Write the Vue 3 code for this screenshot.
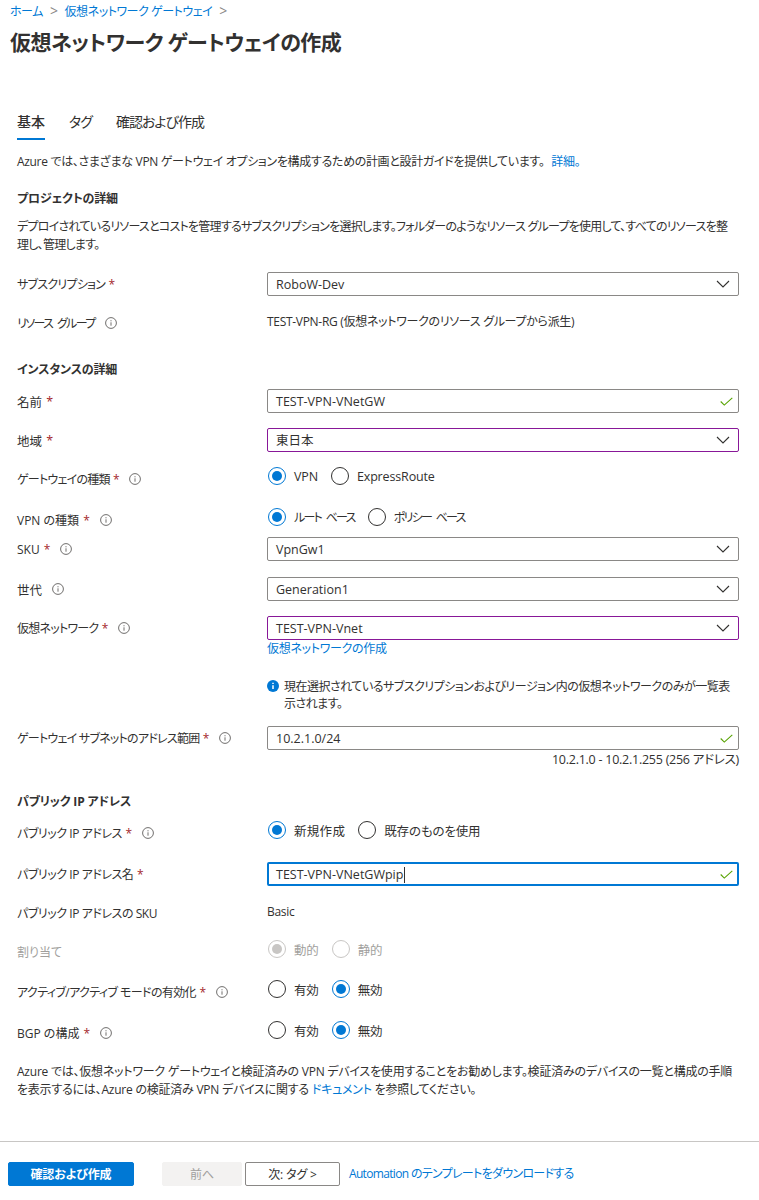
<script setup>
const chevron = 'M1 1l6 6 6-6'
</script>

<template>
  <div class="page">
    <nav class="crumbs">
      <a>ホーム</a><span class="sep">&gt;</span><a>仮想ネットワーク ゲートウェイ</a><span class="sep">&gt;</span>
    </nav>
    <h1>仮想ネットワーク ゲートウェイの作成</h1>

    <div class="tabs">
      <span class="tab active">基本</span>
      <span class="tab">タグ</span>
      <span class="tab">確認および作成</span>
    </div>

    <p class="intro">Azure では、さまざまな VPN ゲートウェイ オプションを構成するための計画と設計ガイドを提供しています。 <a class="more">詳細。</a></p>

    <h2 class="h-project">プロジェクトの詳細</h2>
    <p class="desc">デプロイされているリソースとコストを管理するサブスクリプションを選択します。フォルダーのようなリソース グループを使用して、すべてのリソースを整<br>理し、管理します。</p>

    <div class="row mt-sub">
      <label>サブスクリプション <i>*</i></label>
      <div class="input">RoboW-Dev<svg class="chev" viewBox="0 0 14 8"><path :d="chevron"/></svg></div>
    </div>
    <div class="row mt-13 plain">
      <label class="tight">リソース グループ<svg class="info" viewBox="0 0 12 12"><circle cx="6" cy="6" r="5.4"/><path d="M6 5.3v3.4M6 3.2v1.1"/></svg></label>
      <div>TEST-VPN-RG (仮想ネットワークのリソース グループから派生)</div>
    </div>

    <h2 class="h-instance">インスタンスの詳細</h2>

    <div class="row mt-9">
      <label class="wide">名前 <i>*</i></label>
      <div class="input">TEST-VPN-VNetGW<svg class="check" viewBox="0 0 13 9"><path d="M.7 4.5l3.6 3.6L12.3.8"/></svg></div>
    </div>
    <div class="row mt-15">
      <label class="wide">地域 <i>*</i></label>
      <div class="input purple">東日本<svg class="chev" viewBox="0 0 14 8"><path :d="chevron"/></svg></div>
    </div>
    <div class="row mt-12 radio-row">
      <label>ゲートウェイの種類 <i>*</i><svg class="info" viewBox="0 0 12 12"><circle cx="6" cy="6" r="5.4"/><path d="M6 5.3v3.4M6 3.2v1.1"/></svg></label>
      <div class="radios">
        <span class="radio on"><b></b>VPN</span>
        <span class="radio"><b></b>ExpressRoute</span>
      </div>
    </div>
    <div class="row mt-17 radio-row">
      <label class="keep">VPN の種類 <i>*</i><svg class="info" viewBox="0 0 12 12"><circle cx="6" cy="6" r="5.4"/><path d="M6 5.3v3.4M6 3.2v1.1"/></svg></label>
      <div class="radios">
        <span class="radio on narrow"><b></b>ルート ベース</span>
        <span class="radio narrow"><b></b>ポリシー ベース</span>
      </div>
    </div>
    <div class="row mt-8">
      <label class="keep">SKU <i>*</i><svg class="info" viewBox="0 0 12 12"><circle cx="6" cy="6" r="5.4"/><path d="M6 5.3v3.4M6 3.2v1.1"/></svg></label>
      <div class="input">VpnGw1<svg class="chev" viewBox="0 0 14 8"><path :d="chevron"/></svg></div>
    </div>
    <div class="row mt-16">
      <label class="wide">世代<svg class="info" viewBox="0 0 12 12"><circle cx="6" cy="6" r="5.4"/><path d="M6 5.3v3.4M6 3.2v1.1"/></svg></label>
      <div class="input">Generation1<svg class="chev" viewBox="0 0 14 8"><path :d="chevron"/></svg></div>
    </div>
    <div class="row mt-15">
      <label>仮想ネットワーク <i>*</i><svg class="info" viewBox="0 0 12 12"><circle cx="6" cy="6" r="5.4"/><path d="M6 5.3v3.4M6 3.2v1.1"/></svg></label>
      <div class="input purple">TEST-VPN-Vnet<svg class="chev" viewBox="0 0 14 8"><path :d="chevron"/></svg></div>
    </div>
    <div class="under">
      <a>仮想ネットワークの作成</a>
      <div class="note">
        <svg viewBox="0 0 12 12"><circle cx="6" cy="6" r="6" fill="#0078d4"/><path d="M6 5.2v3.9M6 2.7v1.3" stroke="#fff" stroke-width="1.5"/></svg>
        <span>現在選択されているサブスクリプションおよびリージョン内の仮想ネットワークのみが一覧表<br>示されます。</span>
      </div>
    </div>
    <div class="row mt-subnet">
      <label>ゲートウェイ サブネットのアドレス範囲 <i>*</i><svg class="info" viewBox="0 0 12 12"><circle cx="6" cy="6" r="5.4"/><path d="M6 5.3v3.4M6 3.2v1.1"/></svg></label>
      <div class="input">10.2.1.0/24<svg class="check" viewBox="0 0 13 9"><path d="M.7 4.5l3.6 3.6L12.3.8"/></svg></div>
    </div>
    <div class="range">10.2.1.0 - 10.2.1.255 (256 アドレス)</div>

    <h2 class="h-public">パブリック IP アドレス</h2>

    <div class="row mt-public radio-row">
      <label class="ip">パブリック IP アドレス <i>*</i><svg class="info" viewBox="0 0 12 12"><circle cx="6" cy="6" r="5.4"/><path d="M6 5.3v3.4M6 3.2v1.1"/></svg></label>
      <div class="radios">
        <span class="radio on spread"><b></b>新規作成</span>
        <span class="radio"><b></b>既存のものを使用</span>
      </div>
    </div>
    <div class="row mt-20">
      <label class="ip">パブリック IP アドレス名 <i>*</i></label>
      <div class="input focus">TEST-VPN-VNetGWpip<span class="caret"></span><svg class="check" viewBox="0 0 13 9"><path d="M.7 4.5l3.6 3.6L12.3.8"/></svg></div>
    </div>
    <div class="row mt-13 plain">
      <label class="ip">パブリック IP アドレスの SKU</label>
      <div>Basic</div>
    </div>
    <div class="row mt-14 radio-row disabled">
      <label class="keep">割り当て</label>
      <div class="radios">
        <span class="radio on"><b></b>動的</span>
        <span class="radio"><b></b>静的</span>
      </div>
    </div>
    <div class="row mt-16 radio-row">
      <label class="active-label">アクティブ/アクティブ モードの有効化 <i>*</i><svg class="info" viewBox="0 0 12 12"><circle cx="6" cy="6" r="5.4"/><path d="M6 5.3v3.4M6 3.2v1.1"/></svg></label>
      <div class="radios">
        <span class="radio"><b></b>有効</span>
        <span class="radio on"><b></b>無効</span>
      </div>
    </div>
    <div class="row mt-17 radio-row">
      <label class="keep">BGP の構成 <i>*</i><svg class="info" viewBox="0 0 12 12"><circle cx="6" cy="6" r="5.4"/><path d="M6 5.3v3.4M6 3.2v1.1"/></svg></label>
      <div class="radios">
        <span class="radio"><b></b>有効</span>
        <span class="radio on"><b></b>無効</span>
      </div>
    </div>

    <p class="tail">Azure では、仮想ネットワーク ゲートウェイと検証済みの VPN デバイスを使用することをお勧めします。検証済みのデバイスの一覧と構成の手順<br>を表示するには、Azure の検証済み VPN デバイスに関する <a>ドキュメント</a> を参照してください。</p>

    <footer>
      <button class="primary">確認および作成</button>
      <button class="prev">前へ</button>
      <button class="next">次: タグ &gt;</button>
      <a>Automation のテンプレートをダウンロードする</a>
    </footer>
  </div>
</template>

<style>
html, body { margin: 0; background: #fff; }
</style>

<style scoped>
.page {
  width: 759px;
  height: 1200px;
  box-sizing: border-box;
  overflow: hidden;
  padding-top: 2px;
  font-family: "Open Sans", "Noto Sans CJK JP", sans-serif;
  font-size: 12px;
  font-feature-settings: "palt";
  letter-spacing: -0.15px;
  color: #323130;
  white-space: nowrap;
}
a { color: #0078d4; }
.crumbs { height: 18px; line-height: 18px; padding-left: 10px; color: #0078d4; letter-spacing: -0.45px; }
.crumbs .sep { color: #8a8886; margin: 0 7px; font-size: 14px; }
h1 {
  margin: 3px 0 0 10px;
  height: 38px;
  line-height: 38px;
  font-size: 21px;
  font-weight: 600;
  letter-spacing: -0.5px;
}
.tabs {
  display: flex;
  gap: 24px;
  margin: 49px 0 0 17px;
  height: 30px;
  font-size: 14px;
}
.tab { padding-top: 2px; line-height: 20px; box-sizing: border-box; height: 30px; color: #323130; letter-spacing: -1px; }
.tab.active { border-bottom: 2px solid #0078d4; font-weight: 500; letter-spacing: 0; }
.intro, .desc, .tail { margin: 0 0 0 17px; line-height: 18px; }
.intro { margin-top: 13px; height: 18px; letter-spacing: -0.32px; }
.more { margin-left: 4px; }
h2 { margin: 0 0 0 17px; height: 20px; line-height: 20px; font-size: 12px; font-weight: 700; }
.h-project { margin-top: 18px; }
.desc { margin-top: 9px; height: 36px; letter-spacing: -0.75px; }
.row {
  display: grid;
  grid-template-columns: 250px 472px;
  margin-left: 17px;
  align-items: center;
  min-height: 24px;
}
.row label { display: flex; align-items: center; white-space: pre-wrap; color: #323130; letter-spacing: -0.75px; }
.row label.keep { letter-spacing: 0; }
.row label.ip { letter-spacing: -0.45px; }
.row label.tight { letter-spacing: -1.6px; word-spacing: 3px; }
.row label.wide { font-size: 12.5px; letter-spacing: 0; }
.row label.active-label { letter-spacing: -0.6px; }
.row i { font-style: normal; color: #a4262c; margin-left: 1px; }
.info { width: 12px; height: 12px; margin-left: 10px; fill: none; stroke: #605e5c; stroke-width: .9; flex: none; }
.mt-sub { margin-top: 18px; }
.mt-8 { margin-top: 8px; }
.mt-9 { margin-top: 9px; }
.mt-12 { margin-top: 12px; }
.mt-13 { margin-top: 13px; }
.mt-14 { margin-top: 14px; }
.mt-15 { margin-top: 15px; }
.mt-16 { margin-top: 16px; }
.mt-17 { margin-top: 17px; }
.mt-20 { margin-top: 20px; }
.mt-subnet { margin-top: 13px; }
.mt-public { margin-top: 6px; }
.plain label { padding-top: 4px; }
.plain > div { letter-spacing: -0.3px; }
.radio-row label { padding-top: 6px; }
.h-instance { margin-top: 27px; }
.h-public { margin-top: 23px; }
.input {
  position: relative;
  box-sizing: border-box;
  height: 24px;
  line-height: 20px;
  padding: 2px 0 0 8px;
  border: 1px solid #8a8886;
  border-radius: 2px;
  display: flex;
  align-items: center;
  font-size: 12.5px;
  letter-spacing: 0;
}
.purple { border-color: #881798; }
.focus { border: 2px solid #0078d4; padding: 1px 0 0 7px; }
.caret { width: 1px; height: 16px; background: #323130; margin-left: 1px; }
.chev, .check { position: absolute; fill: none; }
.chev { right: 8px; top: 7px; width: 14px; height: 8px; stroke: #323130; stroke-width: 1.1; }
.check { right: 5px; top: 7px; width: 13px; height: 9px; stroke: #57a300; stroke-width: 1.1; }
.focus .check { right: 4px; top: 6px; }
.radios { display: flex; gap: 13px; padding-left: 1px; }
.radio { display: flex; align-items: center; gap: 8px; height: 24px; font-size: 12.5px; letter-spacing: -0.15px; }
.radio.spread { letter-spacing: 0.3px; }
.radio.narrow { letter-spacing: -1.7px; word-spacing: 3px; font-size: 12px; }
.radio b {
  box-sizing: border-box;
  width: 18px;
  height: 18px;
  border: 1px solid #323130;
  border-radius: 50%;
  display: flex;
  align-items: center;
  justify-content: center;
}
.radio.on b { border-color: #0078d4; }
.radio.on b::after { content: ""; width: 10px; height: 10px; border-radius: 50%; background: #0078d4; }
.disabled label, .disabled .radio { color: #a19f9d; }
.disabled .radio b { border-color: #c8c6c4; }
.disabled .radio.on b::after { background: #c8c6c4; }
.under { margin-left: 267px; height: 73px; }
.under > a { display: block; height: 18px; line-height: 18px; letter-spacing: -0.3px; }
.note { display: flex; gap: 5px; margin-top: 20px; line-height: 17px; letter-spacing: -0.5px; }
.note svg { width: 12px; height: 12px; margin-top: 2px; flex: none; }
.range { margin: 1px 20px 0 0; height: 18px; line-height: 18px; text-align: right; font-size: 12.5px; letter-spacing: -0.25px; }
.tail { margin-top: 21px; height: 36px; letter-spacing: -0.23px; }
footer {
  margin-top: 42px;
  border-top: 1px solid #c8c6c4;
  height: 60px;
  padding: 20px 0 0 8px;
  display: flex;
  align-items: flex-start;
  box-sizing: border-box;
}
footer a { margin-left: 9px; line-height: 24px; letter-spacing: -0.67px; }
button {
  box-sizing: border-box;
  height: 24px;
  padding: 0;
  font: inherit;
  letter-spacing: inherit;
  font-feature-settings: inherit;
  border-radius: 2px;
}
.primary { width: 126px; background: #0078d4; border: 1px solid #0078d4; color: #fff; font-weight: 700; }
.prev { width: 80px; margin-left: 28px; background: #f3f2f1; border: 1px solid #f3f2f1; color: #a19f9d; }
.next { width: 95px; margin-left: 3px; background: #fff; border: 1px solid #8a8886; color: #323130; }
</style>
